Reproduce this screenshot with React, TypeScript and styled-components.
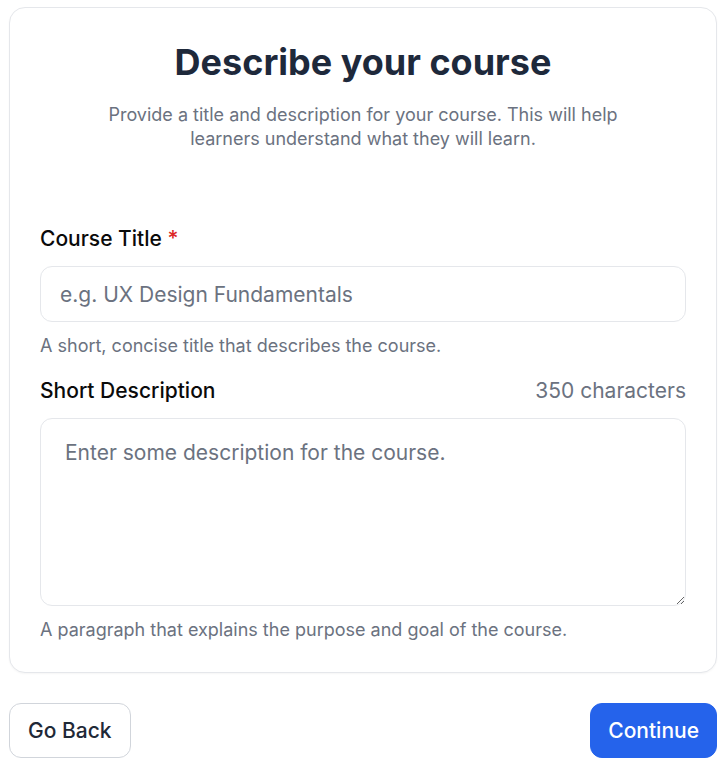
import styled, { createGlobalStyle } from 'styled-components'

const GlobalStyle = createGlobalStyle`
    body {
        margin: 0;
        background: #ffffff;
        font-family: Inter, 'Noto Sans', 'Liberation Sans', sans-serif;
    }
`

const Page = styled.div`
    display: flex;
    flex-direction: column;
    gap: 30px;
    padding: 7px 9px 0;
`

const Card = styled.section`
    border: 1px solid #e5e7eb;
    border-radius: 16px;
    padding: 34px 30px 30px;
    box-shadow: 0 1px 2px rgba(0, 0, 0, 0.04);
    background: #ffffff;
`

const Header = styled.header`
    text-align: center;
    margin-bottom: 74px;
`

const Title = styled.h1`
    margin: 0;
    font-size: 36px;
    line-height: 40px;
    font-weight: 700;
    color: #1e293b;
`

const Subtitle = styled.p`
    margin: 21px auto 0;
    max-width: 540px;
    font-size: 18px;
    line-height: 24px;
    color: #6b7280;
`

const Field = styled.div`
    display: flex;
    flex-direction: column;

    & + & {
        margin-top: 19px;
    }
`

const LabelRow = styled.div`
    display: flex;
    justify-content: space-between;
    align-items: center;
    margin-bottom: 13px;
`

const Label = styled.label`
    font-size: 21px;
    line-height: 28px;
    font-weight: 500;
    color: #0a0a0a;
`

const Required = styled.span`
    color: #dc2626;
`

const Counter = styled.span`
    font-size: 21px;
    line-height: 28px;
    color: #6b7280;
`

const TextInput = styled.input`
    box-sizing: border-box;
    height: 56px;
    width: 100%;
    padding: 0 19px;
    border: 1px solid #e5e7eb;
    border-radius: 12px;
    font-family: inherit;
    font-size: 21px;
    color: #111827;
    outline: none;

    &::placeholder {
        color: #6b7280;
    }
`

const TextArea = styled.textarea`
    box-sizing: border-box;
    display: block;
    height: 188px;
    width: 100%;
    padding: 19px 24px;
    border: 1px solid #e5e7eb;
    border-radius: 12px;
    font-family: inherit;
    font-size: 21px;
    line-height: 30px;
    color: #111827;
    resize: vertical;
    outline: none;

    &::placeholder {
        color: #6b7280;
    }
`

const Hint = styled.p`
    margin: 12px 0 0;
    font-size: 18px;
    line-height: 24px;
    color: #6b7280;
`

const Footer = styled.div`
    display: flex;
    justify-content: space-between;
    align-items: center;
`

const Button = styled.button<{ $primary?: boolean }>`
    height: 55px;
    padding: 0 ${({ $primary }) => ($primary ? '17px' : '18px')};
    border-radius: 12px;
    font-family: inherit;
    font-size: 21px;
    font-weight: 500;
    cursor: pointer;
    border: 1px solid ${({ $primary }) => ($primary ? '#2563eb' : '#d1d5db')};
    background: ${({ $primary }) => ($primary ? '#2563eb' : '#ffffff')};
    color: ${({ $primary }) => ($primary ? '#ffffff' : '#1f2937')};
`

function App() {
    return (
        <Page>
            <GlobalStyle />
            <Card>
                <Header>
                    <Title>Describe your course</Title>
                    <Subtitle>
                        Provide a title and description for your course. This will help learners
                        understand what they will learn.
                    </Subtitle>
                </Header>

                <Field>
                    <LabelRow>
                        <Label htmlFor="course-title">
                            Course Title <Required>*</Required>
                        </Label>
                    </LabelRow>
                    <TextInput id="course-title" placeholder="e.g. UX Design Fundamentals" />
                    <Hint>A short, concise title that describes the course.</Hint>
                </Field>

                <Field>
                    <LabelRow>
                        <Label htmlFor="course-description">Short Description</Label>
                        <Counter>350 characters</Counter>
                    </LabelRow>
                    <TextArea
                        id="course-description"
                        placeholder="Enter some description for the course."
                    />
                    <Hint>A paragraph that explains the purpose and goal of the course.</Hint>
                </Field>
            </Card>

            <Footer>
                <Button>Go Back</Button>
                <Button $primary>Continue</Button>
            </Footer>
        </Page>
    )
}

export default App
